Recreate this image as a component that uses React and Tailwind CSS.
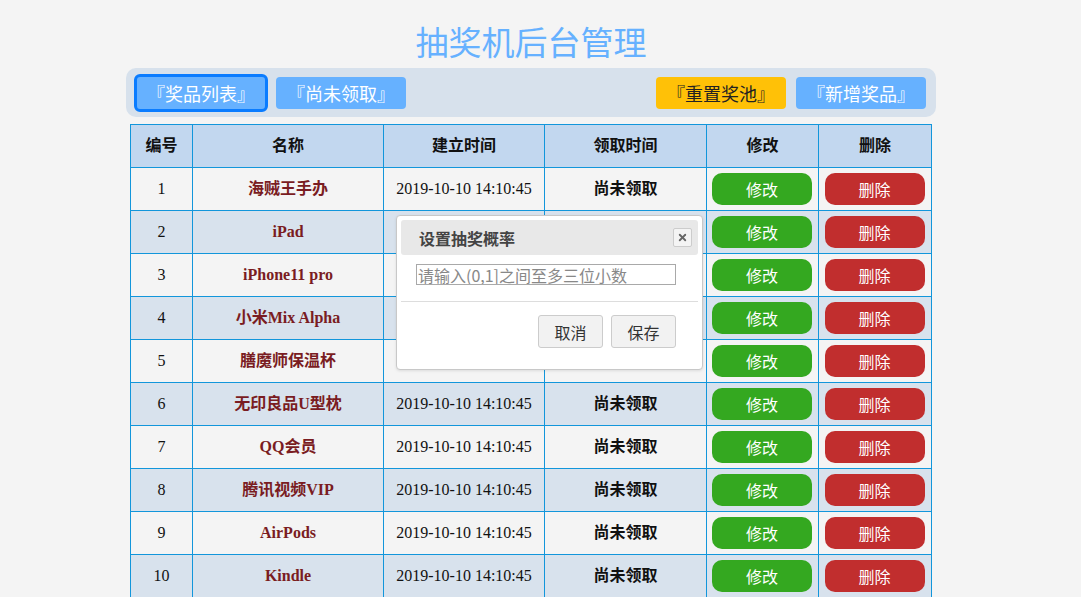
import React from "react";
import { X } from "lucide-react";

const prizes = [
  { id: 1, name: "海贼王手办" },
  { id: 2, name: "iPad" },
  { id: 3, name: "iPhone11 pro" },
  { id: 4, name: "小米Mix Alpha" },
  { id: 5, name: "膳魔师保温杯" },
  { id: 6, name: "无印良品U型枕" },
  { id: 7, name: "QQ会员" },
  { id: 8, name: "腾讯视频VIP" },
  { id: 9, name: "AirPods" },
  { id: 10, name: "Kindle" },
];

const serif = "font-['Liberation_Serif','Noto_Sans_CJK_SC',serif]";
const sans = "font-['Noto_Sans_CJK_SC','Liberation_Sans',sans-serif]";

export default function App() {
  return (
    <div className={`relative min-h-[597px] h-[597px] overflow-hidden bg-[#f4f4f4] ${serif}`}>
      <div className="ml-[126px] w-[810px] pt-[24px]">
        {/* 标题 */}
        <h1 className="h-[40px] text-center text-[33px] leading-[40px] text-[#66b1ff]">
          抽奖机后台管理
        </h1>

        {/* 导航按钮 */}
        <nav className={`mt-[4px] flex h-[49px] items-center rounded-[10px] bg-[#d7e1ec] pl-[8px] pr-[10px] ${sans}`}>
          <button className="h-[38px] w-[134px] rounded-[6px] border-[3px] border-[#0a7cff] bg-[#66b1ff] text-[18px] leading-none text-white">
            『奖品列表』
          </button>
          <button className="ml-[8px] h-[32px] w-[130px] rounded-[4px] bg-[#66b1ff] text-[18px] leading-none text-white">
            『尚未领取』
          </button>
          <button className="ml-auto h-[32px] w-[130px] rounded-[4px] bg-[#ffc107] text-[18px] leading-none text-[#222]">
            『重置奖池』
          </button>
          <button className="ml-[10px] h-[32px] w-[130px] rounded-[4px] bg-[#66b1ff] text-[18px] leading-none text-white">
            『新增奖品』
          </button>
        </nav>

        {/* 奖品列表 */}
        <table className="mx-[4px] mt-[7px] w-[801px] table-fixed border-collapse text-center">
          <colgroup>
            <col className="w-[62px]" />
            <col className="w-[191px]" />
            <col className="w-[161px]" />
            <col className="w-[162px]" />
            <col className="w-[112px]" />
            <col className="w-[113px]" />
          </colgroup>
          <thead>
            <tr className="h-[43px] bg-[#c2d7ef] text-[16px] font-bold text-[#111]">
              <th className="border border-[#1296db]">编号</th>
              <th className="border border-[#1296db]">名称</th>
              <th className="border border-[#1296db]">建立时间</th>
              <th className="border border-[#1296db]">领取时间</th>
              <th className="border border-[#1296db]">修改</th>
              <th className="border border-[#1296db]">删除</th>
            </tr>
          </thead>
          <tbody>
            {prizes.map((p, i) => {
              // 弹窗盖住的行，时间列不显示
              const covered = p.id >= 2 && p.id <= 5;
              return (
                <tr
                  key={p.id}
                  className={`h-[43px] ${i % 2 === 0 ? "bg-[#f4f4f4]" : "bg-[#d8e2ed]"}`}
                >
                  <td className="border border-[#1296db] text-[16px] text-[#111]">{p.id}</td>
                  <td className="border border-[#1296db] text-[16px] font-bold text-[#7a1c22]">
                    {p.name}
                  </td>
                  <td className="border border-[#1296db] text-[16px] text-[#111]">
                    {covered ? "" : "2019-10-10 14:10:45"}
                  </td>
                  <td className="border border-[#1296db] text-[16px] font-bold text-[#111]">
                    {covered ? "" : "尚未领取"}
                  </td>
                  <td className="border border-[#1296db]">
                    <button className={`-ml-px h-[32px] w-[100px] rounded-[10px] bg-[#34a820] text-[16px] text-white ${sans}`}>
                      修改
                    </button>
                  </td>
                  <td className="border border-[#1296db]">
                    <button className={`-ml-px h-[32px] w-[100px] rounded-[10px] bg-[#c12e2e] text-[16px] text-white ${sans}`}>
                      删除
                    </button>
                  </td>
                </tr>
              );
            })}
          </tbody>
        </table>
      </div>

      {/* 设置抽奖概率弹窗 */}
      <div
        className={`absolute left-[396px] top-[215px] flex h-[155px] w-[307px] flex-col rounded-[4px] border border-[#c8c8c8] bg-white p-[4px] shadow-[0_1px_3px_rgba(0,0,0,0.1)] ${sans}`}
      >
        <div className="flex h-[35px] items-center rounded-[3px] bg-[#e8e8e8] pl-[18px] pr-[6px]">
          <span className="text-[16px] font-bold text-[#444]">设置抽奖概率</span>
          <button className="ml-auto flex h-[19px] w-[19px] items-center justify-center rounded-[2px] border border-[#ccc] bg-[#f4f4f4] text-[#666]">
            <X size={11} strokeWidth={4} />
          </button>
        </div>
        <input
          className="ml-[15px] mt-[9px] h-[21px] w-[260px] border border-[#a9a9a9] px-[1px] text-[16px] leading-none text-[#333] outline-none placeholder:text-[#888]"
          placeholder="请输入(0,1]之间至多三位小数"
        />
        <div className="mt-[16px] border-t border-[#ddd]" />
        <div className="mt-[13px] flex justify-end gap-[8px] pr-[22px]">
          <button className="h-[33px] w-[65px] rounded-[3px] border border-[#ccc] bg-[#f2f2f2] text-[16px] text-[#333]">
            取消
          </button>
          <button className="h-[33px] w-[65px] rounded-[3px] border border-[#ccc] bg-[#f2f2f2] text-[16px] text-[#333]">
            保存
          </button>
        </div>
      </div>
    </div>
  );
}
